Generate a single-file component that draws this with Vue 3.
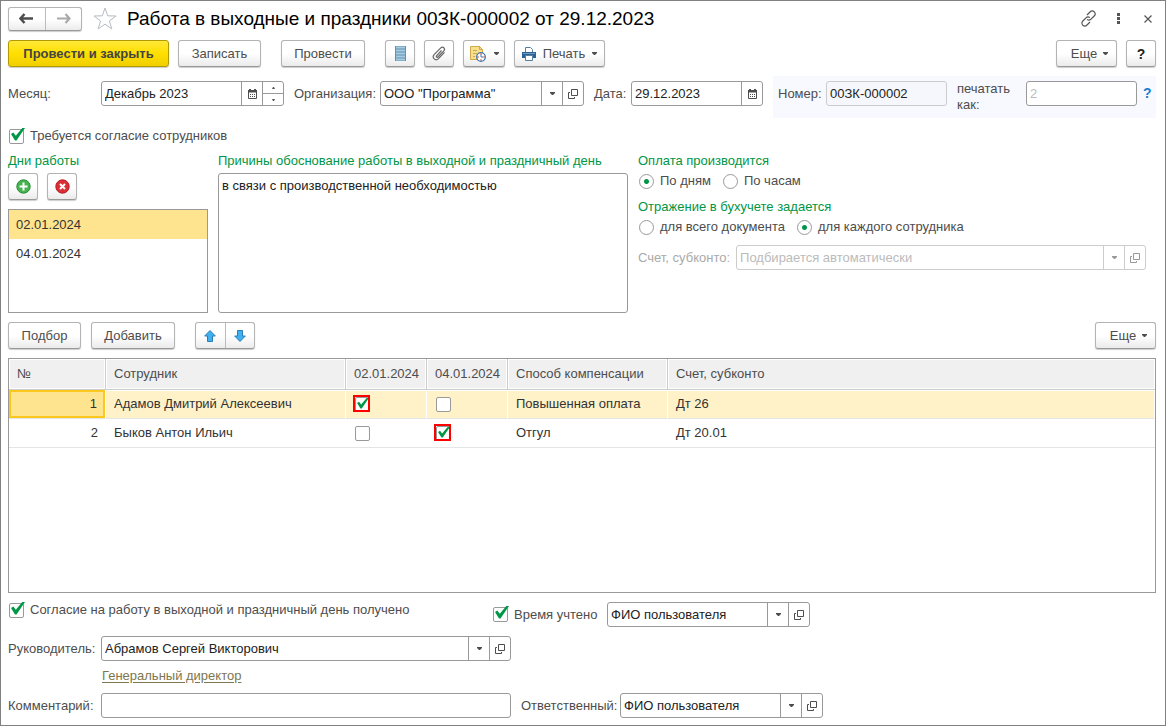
<script setup>
import { ref } from 'vue'

const needConsent = ref(true)
const consentGiven = ref(true)
const timeCounted = ref(true)
const payMode = ref('days')
const accounting = ref('employee')
const month = ref('Декабрь 2023')
const organization = ref('ООО "Программа"')
const docDate = ref('29.12.2023')
const docNumber = ref('00ЗК-000002')
const reason = ref('в связи с производственной необходимостью')
const manager = ref('Абрамов Сергей Викторович')
const comment = ref('')
const countedBy = ref('ФИО пользователя')
const responsible = ref('ФИО пользователя')

const workDays = ['02.01.2024', '04.01.2024']
const selectedDay = ref(0)

const rows = ref([
  { name: 'Адамов Дмитрий Алексеевич', days: [true, false], pay: 'Повышенная оплата', account: 'Дт 26' },
  { name: 'Быков Антон Ильич', days: [false, true], pay: 'Отгул', account: 'Дт 20.01' },
])
</script>

<template>
  <main class="window">
    <svg class="defs" aria-hidden="true">
      <symbol id="i-open" viewBox="0 0 10 10">
        <path d="M3.5.5h6v6h-6zM2 3.5H.5v6h6V8" fill="none" stroke="currentColor" />
      </symbol>
      <symbol id="i-down" viewBox="0 0 5 3">
        <path d="M0 0h5v1L3 3H2L0 1z" fill="currentColor" />
      </symbol>
      <symbol id="i-cal" viewBox="0 0 9 10">
        <path d="M0 1h1V0h2v1h3V0h2v1h1v2.500H0z" fill="currentColor" />
        <path d="M.5 3v6.500h8V3" fill="none" stroke="currentColor" />
        <path d="M2 5.500h1m1 0h1m1 0h1M2 7.500h1m1 0h1m1 0h1" stroke="currentColor" fill="none" />
      </symbol>
      <symbol id="i-check" viewBox="0 0 14 13">
        <path d="M0 6 2.300 4.500l2.500 3.300L11.300 0H14L5.500 12.500H4z" fill="#009646" />
      </symbol>
    </svg>

    <header class="title-row">
      <div class="pair nav">
        <button aria-label="Назад">
          <svg width="15" height="11" viewBox="0 0 15 11"><path d="M5.500 1 1.500 5.500l4 4.500M2 5.500h12" fill="none" stroke="#4d4d4d" stroke-width="2.500" /></svg>
        </button>
        <button aria-label="Вперед">
          <svg width="15" height="11" viewBox="0 0 15 11"><path d="m9.500 1 4 4.500-4 4.500M13 5.500H1" fill="none" stroke="#aaa" stroke-width="2.200" /></svg>
        </button>
      </div>
      <button class="bare star" aria-label="В избранное">
        <svg width="24" height="23" viewBox="0 0 24 23"><path d="m12 1 2.700 7.800 8.300.2-6.600 5 2.400 7.900-6.800-4.700-6.800 4.700L7.600 14 1 9l8.300-.2z" fill="#fff" stroke="#b4bcc4" /></svg>
      </button>
      <h1>Работа в выходные и праздники 00ЗК-000002 от 29.12.2023</h1>
      <div class="window-tools">
        <button class="bare" aria-label="Ссылка">
          <svg width="17" height="17" viewBox="0 0 17 17"><g fill="none" stroke="#555" stroke-width="1.200"><path d="m7 5 3-3c1.300-1.300 3-1.300 4.200-.2 1.200 1.200 1.200 3 0 4.200L11 9.200c-1.200 1.200-2.700 1.200-3.900.2" /><path d="m10 12-3 3c-1.300 1.300-3 1.300-4.200.2-1.200-1.200-1.200-3 0-4.200L6 7.800C7.200 6.600 8.700 6.600 9.900 7.600" /></g></svg>
        </button>
        <button class="bare dots" aria-label="Меню">
          <svg width="3" height="11" viewBox="0 0 3 11"><path d="M0 0h3v3H0zm0 4h3v3H0zm0 4h3v3H0z" fill="#555" /></svg>
        </button>
        <button class="bare" aria-label="Закрыть">
          <svg width="8" height="8" viewBox="0 0 8 8"><path d="m.5.5 7 7m0-7-7 7" stroke="#555" stroke-width="1.200" /></svg>
        </button>
      </div>
    </header>

    <div class="toolbar">
      <button class="btn primary">Провести и закрыть</button>
      <button class="btn w-save">Записать</button>
      <button class="btn w-post">Провести</button>
      <button class="btn icon" aria-label="Список">
        <svg width="11" height="15" viewBox="0 0 11 15"><path d="M0 0h11v15H0z" fill="#5f92b5" /><path d="M1 1.500h9m-9 3h9m-9 3h9m-9 3h9m-9 3h9" stroke="#a9cbe2" stroke-width="2" /></svg>
      </button>
      <button class="btn icon" aria-label="Файлы">
        <svg width="14" height="15" viewBox="0 0 14 15"><path d="m9.500 4.500-5 5.300c-.8.900.5 2.100 1.400 1.200l5.900-6.200c1.900-2.200-.9-4.900-3-2.900L2.300 8.400c-3 3.300 1.200 7.200 4.200 4.200L12.500 6.300" fill="none" stroke="#666" stroke-width="1.200" /></svg>
      </button>
      <button class="btn report" aria-label="Отчеты">
        <svg width="16" height="16" viewBox="0 0 16 16"><path d="M.5.500h9l3 3v10h-12z" fill="#f8df8b" stroke="#cfa94c" /><path d="M9.500.500v3h3M3 4.500h4M3 7.500h4M3 10.500h2" fill="none" stroke="#cfa94c" /><circle cx="11" cy="11" r="4.300" fill="#fff" stroke="#3d77b0" stroke-width="1.300" /><path d="M11 7v2M11 13v2M7 11h2M13 11h2" stroke="#e0563f" /><path d="M11 8.500V11h2" fill="none" stroke="#3d77b0" /></svg>
        <svg class="arrow"><use href="#i-down" /></svg>
      </button>
      <button class="btn print">
        <svg width="14" height="14" viewBox="0 0 14 14"><path d="M3.500 5V.500h5l2 2V5" fill="#fff" stroke="#5580a0" /><path d="M0 5h14v6H0z" fill="#2b6293" /><path d="M1 6.500h12" stroke="#6f9cc0" /><path d="M3.500 8.500h7v5h-7z" fill="#fff" stroke="#5580a0" /></svg>
        <span>Печать</span>
        <svg class="arrow"><use href="#i-down" /></svg>
      </button>
      <button class="btn more push">Еще <svg class="arrow"><use href="#i-down" /></svg></button>
      <button class="btn icon help">?</button>
    </div>

    <div class="fields">
      <label class="lead" for="month">Месяц:</label>
      <div class="field month">
        <input id="month" v-model="month">
        <button aria-label="Календарь"><svg class="cal"><use href="#i-cal" /></svg></button>
        <div class="spin">
          <button aria-label="Больше"><svg width="3" height="2" viewBox="0 0 3 2"><path d="M1 0h1l1 2H0z" fill="#555" /></svg></button>
          <button aria-label="Меньше"><svg width="3" height="2" viewBox="0 0 3 2"><path d="M0 0h3L2 2H1z" fill="#555" /></svg></button>
        </div>
      </div>
      <label class="l-org" for="org">Организация:</label>
      <div class="field org">
        <input id="org" v-model="organization">
        <button aria-label="Выбрать"><svg class="arrow"><use href="#i-down" /></svg></button>
        <button aria-label="Открыть"><svg class="open"><use href="#i-open" /></svg></button>
      </div>
      <label class="l-date" for="date">Дата:</label>
      <div class="field date">
        <input id="date" v-model="docDate">
        <button aria-label="Календарь"><svg class="cal"><use href="#i-cal" /></svg></button>
      </div>
      <div class="number-panel">
        <label class="l-num" for="num">Номер:</label>
        <div class="field locked num"><input id="num" v-model="docNumber" readonly></div>
        <label class="l-as" for="as">печатать как:</label>
        <div class="field as"><input id="as" placeholder="2"></div>
        <a class="hint" href="#" aria-label="Подсказка">?</a>
      </div>
    </div>

    <label class="check consent">
      <span class="box"><input v-model="needConsent" type="checkbox"><svg v-if="needConsent"><use href="#i-check" /></svg></span>
      Требуется согласие сотрудников
    </label>

    <div class="middle">
      <section class="days">
        <h2>Дни работы</h2>
        <div class="day-buttons">
          <button class="btn icon" aria-label="Добавить день">
            <svg width="15" height="15" viewBox="0 0 15 15"><circle cx="7.500" cy="7.500" r="6.700" fill="#46b350" stroke="#2a8d39" /><path d="M7.500 3.500v8m-4-4h8" stroke="#fff" stroke-width="2" /></svg>
          </button>
          <button class="btn icon" aria-label="Удалить день">
            <svg width="15" height="15" viewBox="0 0 15 15"><circle cx="7.500" cy="7.500" r="6.700" fill="#dc2f35" stroke="#b51e26" /><path d="m5 5 5 5m0-5-5 5" stroke="#fff" stroke-width="2" /></svg>
          </button>
        </div>
        <ul>
          <li v-for="(d, i) in workDays" :key="d" :class="{ on: i === selectedDay }" @click="selectedDay = i">{{ d }}</li>
        </ul>
      </section>
      <section class="reason">
        <h2><label for="reason">Причины обоснование работы в выходной и праздничный день</label></h2>
        <textarea id="reason" v-model="reason"></textarea>
      </section>
      <section class="options">
        <h2>Оплата производится</h2>
        <div class="radios">
          <label><input v-model="payMode" type="radio" name="pay" value="days">По дням</label>
          <label><input v-model="payMode" type="radio" name="pay" value="hours">По часам</label>
        </div>
        <h2>Отражение в бухучете задается</h2>
        <div class="radios">
          <label><input v-model="accounting" type="radio" name="acc" value="doc">для всего документа</label>
          <label><input v-model="accounting" type="radio" name="acc" value="employee">для каждого сотрудника</label>
        </div>
        <div class="account">
          <label for="account">Счет, субконто:</label>
          <div class="field disabled">
            <input id="account" placeholder="Подбирается автоматически" disabled>
            <button disabled aria-label="Выбрать"><svg class="arrow"><use href="#i-down" /></svg></button>
            <button disabled aria-label="Открыть"><svg class="open"><use href="#i-open" /></svg></button>
          </div>
        </div>
      </section>
    </div>

    <div class="commands">
      <button class="btn w-pick">Подбор</button>
      <button class="btn w-add">Добавить</button>
      <div class="pair move">
        <button aria-label="Вверх">
          <svg width="12" height="12" viewBox="0 0 12 12"><path d="m6 .500 5.300 5.500H8.500v5.500h-5V6H.700z" fill="#3fb0f0" stroke="#2c7cb5" /></svg>
        </button>
        <button aria-label="Вниз">
          <svg width="12" height="12" viewBox="0 0 12 12"><path d="m6 11.500 5.300-5.500H8.500V.500h-5V6H.700z" fill="#3fb0f0" stroke="#2c7cb5" /></svg>
        </button>
      </div>
      <button class="btn more push">Еще <svg class="arrow"><use href="#i-down" /></svg></button>
    </div>

    <div class="grid">
      <table>
        <colgroup><col class="c-no"><col class="c-name"><col class="c-day"><col class="c-day"><col class="c-pay"><col></colgroup>
        <thead>
          <tr><th>№</th><th>Сотрудник</th><th v-for="d in workDays" :key="d">{{ d }}</th><th>Способ компенсации</th><th>Счет, субконто</th></tr>
        </thead>
        <tbody>
          <tr v-for="(r, i) in rows" :key="r.name" :class="{ current: i === 0 }">
            <td class="no">{{ i + 1 }}</td>
            <td>{{ r.name }}</td>
            <td v-for="(v, j) in r.days" :key="j">
              <span class="box" :class="{ marked: v }"><input v-model="r.days[j]" type="checkbox" :aria-label="r.name + ' ' + workDays[j]"><svg v-if="v"><use href="#i-check" /></svg></span>
            </td>
            <td>{{ r.pay }}</td>
            <td>{{ r.account }}</td>
          </tr>
        </tbody>
      </table>
    </div>

    <div class="confirm">
      <label class="check given">
        <span class="box"><input v-model="consentGiven" type="checkbox"><svg v-if="consentGiven"><use href="#i-check" /></svg></span>
        Согласие на работу в выходной и праздничный день получено
      </label>
      <label class="check counted">
        <span class="box"><input v-model="timeCounted" type="checkbox"><svg v-if="timeCounted"><use href="#i-check" /></svg></span>
        Время учтено
      </label>
      <div class="field user">
        <input v-model="countedBy" aria-label="Время учтено: пользователь">
        <button aria-label="Выбрать"><svg class="arrow"><use href="#i-down" /></svg></button>
        <button aria-label="Открыть"><svg class="open"><use href="#i-open" /></svg></button>
      </div>
    </div>

    <div class="line">
      <label class="lead" for="manager">Руководитель:</label>
      <div class="field wide">
        <input id="manager" v-model="manager">
        <button aria-label="Выбрать"><svg class="arrow"><use href="#i-down" /></svg></button>
        <button aria-label="Открыть"><svg class="open"><use href="#i-open" /></svg></button>
      </div>
    </div>
    <a class="position" href="#">Генеральный директор</a>
    <div class="line">
      <label class="lead" for="comment">Комментарий:</label>
      <div class="field wide"><input id="comment" v-model="comment"></div>
      <label class="l-resp" for="resp">Ответственный:</label>
      <div class="field user">
        <input id="resp" v-model="responsible">
        <button aria-label="Выбрать"><svg class="arrow"><use href="#i-down" /></svg></button>
        <button aria-label="Открыть"><svg class="open"><use href="#i-open" /></svg></button>
      </div>
    </div>
  </main>
</template>

<style>
body { background: #fff; }
</style>

<style scoped>
* { box-sizing: border-box; }
.window { min-height: 100vh; border: 1px solid #808080; padding: 5px 9px 7px 7px; font: 13px/16px "Liberation Sans", Arial, sans-serif; color: #4d4d4d; display: flex; flex-direction: column; }
.defs { position: absolute; width: 0; height: 0; }
button, input, textarea { font: inherit; color: inherit; margin: 0; }
button { padding: 0; background: none; border: 0; display: flex; align-items: center; justify-content: center; flex: none; }
svg { display: block; flex: none; }
h1, h2, ul { margin: 0; padding: 0; font-weight: normal; }
.arrow { width: 5px; height: 3px; }
.open { width: 10px; height: 10px; }
.cal { width: 9px; height: 10px; }

.title-row { display: flex; align-items: center; height: 25px; }
.pair { display: flex; border: 1px solid #b3b3b3; border-bottom-color: #999; border-radius: 3px; background: linear-gradient(#fff 50%, #ececec); box-shadow: 0 1px 1px #ccc; }
.pair button + button { border-left: 1px solid #bbb; }
.nav { width: 74px; height: 24px; }
.nav button { flex: 1; }
.star { margin: 0 10px 0 11px; }
h1 { font-size: 19px; line-height: 24px; color: #000; flex: 1; }
.window-tools { display: flex; align-items: center; gap: 20px; padding-right: 4px; }
.dots { margin-right: 4px; }

.toolbar, .commands { display: flex; }
.toolbar { margin-top: 9px; }
.btn { height: 27px; border: 1px solid #b3b3b3; border-bottom-color: #999; border-radius: 3px; background: linear-gradient(#fff 50%, #ebebeb); box-shadow: 0 1px 1px #ccc; }
.primary { width: 161px; font-weight: bold; color: #444; border-color: #b09a00; background: linear-gradient(#ffe838, #ffdf00 50%, #f0cf00); }
.w-save { width: 83px; margin-left: 9px; }
.w-post { width: 84px; margin: 0 20px; }
.icon { width: 30px; }
.toolbar .icon + .icon, .report, .print { margin-left: 9px; }
.report { width: 42px; gap: 8px; }
.print { width: 91px; gap: 7px; }
.more { width: 61px; gap: 6px; padding-left: 6px; }
.push { margin-left: auto; }
.help { margin-left: 9px; font-weight: bold; font-size: 14px; color: #222; }

.fields { display: flex; align-items: flex-start; margin-top: 9px; line-height: 25px; }
.fields > .field, .fields > label { margin-top: 5px; }
.lead { width: 93px; flex: none; }
.field { display: flex; height: 25px; border: 1px solid #999; border-radius: 3px; background: #fff; flex: none; overflow: hidden; }
.field input { flex: 1; min-width: 0; width: 0; border: 0; padding: 0 3px; background: none; outline: 0; color: #222; }
.field > button { width: 21px; border-left: 1px solid #999; }
.month { width: 183px; }
.spin { width: 21px; border-left: 1px solid #999; display: flex; flex-direction: column; }
.spin button { flex: 1; }
.spin button + button { border-top: 1px solid #999; }
.org { width: 204px; }
.user { width: 203px; }
.date { width: 132px; }
.l-org { width: 96px; padding-left: 10px; flex: none; }
.l-date { width: 47px; padding-left: 10px; flex: none; }
.number-panel { flex: 1; display: flex; margin-left: 10px; height: 42px; padding: 5px; background: #f7f9ff; }
.l-num { width: 48px; flex: none; }
.num { width: 121px; }
.locked { background: #f5f7fc; border-color: #ccc; }
.l-as { width: 79px; padding: 0 10px; line-height: 16px; flex: none; }
.as { flex: 1; }
.field input::placeholder { color: #bbb; opacity: 1; }
.hint { width: 14px; padding-left: 6px; font-weight: bold; font-size: 14px; color: #1a80d0; text-decoration: none; }

.check { display: flex; align-items: center; gap: 6px; padding-left: 1px; }
.consent { margin-top: 10px; }
.box { position: relative; width: 15px; height: 15px; display: block; flex: none; }
.box input { appearance: none; display: block; width: 15px; height: 15px; border: 1px solid #999; border-radius: 2px; background: #fff; }
.box svg { position: absolute; left: 2px; top: -1px; width: 14px; height: 13px; pointer-events: none; }
.marked::after { content: ""; box-sizing: border-box; position: absolute; left: -2px; top: -2px; width: 17px; height: 17px; border: 2px solid #f00; }
.box.marked svg { left: 2px; top: 1px; width: 12px; height: 11px; }

.middle { display: flex; gap: 10px; margin-top: 9px; }
h2 { font-size: 13px; line-height: 16px; color: #009646; }
.days { width: 200px; flex: none; }
.day-buttons { display: flex; gap: 9px; margin: 4px 0 9px; }
.days ul { list-style: none; height: 104px; border: 1px solid #999; color: #333; }
.days li { height: 29px; line-height: 29px; padding-left: 7px; }
.days .on { background: #ffe48f; }
.reason { width: 410px; flex: none; display: flex; flex-direction: column; }
.reason textarea { flex: 1; margin-top: 4px; border: 1px solid #999; border-radius: 3px; padding: 4px 3px; resize: none; outline: 0; color: #222; }
.options { flex: 1; padding-right: 10px; }
.radios { display: flex; gap: 11px; margin: 4px 0 10px; }
.radios label { display: flex; align-items: center; gap: 6px; padding-left: 1px; }
.radios input { appearance: none; width: 15px; height: 15px; border: 1px solid #999; border-radius: 50%; background: #fff; }
.radios input:checked { background: radial-gradient(circle, #009646 2px, #fff 3px); }
.account { display: flex; gap: 6px; line-height: 25px; color: #aaa; }
.disabled { flex: 1; border-color: #ccc; }
.disabled > button { border-color: #ccc; color: #999; }

.commands { margin-top: 9px; }
.w-pick { width: 73px; }
.w-add { width: 84px; margin-left: 10px; }
.move { width: 60px; height: 27px; margin-left: 20px; }
.move button { flex: 1; }

.grid { flex: 1; margin-top: 9px; border: 1px solid #999; }
table { width: 100%; table-layout: fixed; border-collapse: separate; border-spacing: 0; }
.c-no { width: 97px; }
.c-name { width: 240px; }
.c-day { width: 81px; }
.c-pay { width: 160px; }
th { height: 31px; padding: 0 7px 0 8px; text-align: left; font-weight: normal; white-space: nowrap; background: #f0f0f0; border-right: 1px solid #ccc; border-bottom: 1px solid #ccc; box-shadow: inset 0 0 0 1px #fff; }
th:last-child { border-right: 0; }
td { height: 29px; padding: 0 8px; color: #333; border-bottom: 1px solid #e5e5e5; }
td .box { margin-left: 1px; }
.no { text-align: right; }
.current td { background: #fff2c8; border-right: 1px solid #fff; box-shadow: inset 0 1px #fff; }
.current .no { background: #ffe48f; box-shadow: inset 0 0 0 2px #fac81e; }

.confirm { display: flex; align-items: flex-start; margin-top: 9px; }
.given { width: 484px; }
.counted { width: 115px; height: 25px; }
.line { display: flex; line-height: 25px; }
.confirm + .line { margin-top: 9px; }
.wide { width: 410px; }
.position { margin: 7px 0 9px 94px; align-self: flex-start; color: #7d7650; text-underline-offset: 2px; }
.l-resp { width: 109px; padding-left: 10px; flex: none; }
</style>
